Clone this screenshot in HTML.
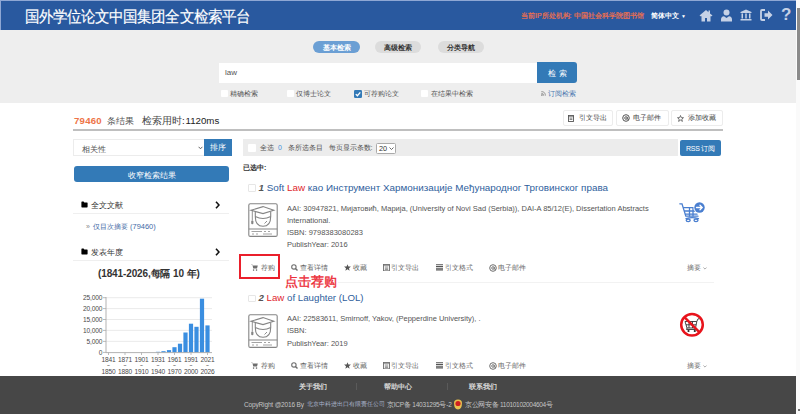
<!DOCTYPE html>
<html><head><meta charset="utf-8">
<style>
*{margin:0;padding:0;box-sizing:border-box}
html,body{width:800px;height:414px;overflow:hidden;background:#fff;font-family:"Liberation Sans",sans-serif;color:#333}
.a{position:absolute;white-space:nowrap}
#hdr{position:absolute;left:0;top:0;width:796px;height:30px;background:#29599f;border-top:1px solid #8ea7d4;border-left:1px solid #8ea7d4}
#sb{position:absolute;left:796px;top:0;width:4px;height:414px;background:#fafafa}
#thumb{position:absolute;left:797px;top:8px;width:3px;height:72px;background:#8a8a8a}
#band{position:absolute;left:0;top:30px;width:796px;height:73px;background:#eeeeee}
.tab{position:absolute;top:40.5px;height:12px;border-radius:6px;font-size:7.3px;font-weight:bold;text-align:center;line-height:13px}
.cb{position:absolute;width:7px;height:7px;background:#fff;border-radius:1px}
.btnw{position:absolute;background:#fff;border:1px solid #ececec;border-radius:2px}
#footer{position:absolute;left:0;top:376px;width:796px;height:38px;background:#474747}
.act{position:absolute;font-size:7.3px;color:#666;line-height:9px;white-space:nowrap}
.meta{position:absolute;left:287px;font-size:7.5px;color:#555;line-height:12px}
</style></head><body>
<div id="hdr"></div>
<div class="a" style="left:24.5px;top:6.8px;font-size:14.3px;color:#fff;line-height:18px;transform:scaleY(1.1);transform-origin:0 0;-webkit-text-stroke:0.15px #fff;letter-spacing:0.1px">国外学位论文中国集团全文检索平台</div>
<div class="a" style="left:521px;top:11px;font-size:7px;color:#f0704c;line-height:9px;-webkit-text-stroke:0.2px #f0704c">当前IP所处机构: 中国社会科学院图书馆</div>
<div class="a" style="left:651px;top:11px;font-size:7px;color:#fff;font-weight:bold;line-height:9px">简体中文 <span style="font-size:5px">▼</span></div>


<svg class="a" style="left:699px;top:9px" width="14" height="13" viewBox="0 0 14 13"><path d="M7 1 L0.5 6.5 L2 7.5 L2.5 7 V12.5 H6 V9 H8 V12.5 H11.5 V7 L12 7.5 L13.5 6.5 L11 4.4 V1.5 H9.5 V3.2 Z" fill="#c5d1e6"/></svg>
<svg class="a" style="left:721px;top:9px" width="11" height="13" viewBox="0 0 11 13"><circle cx="5.5" cy="3.5" r="3" fill="#c5d1e6"/><path d="M0 12.5 V10.5 Q0 7.5 3 7.3 L5.5 9 L8 7.3 Q11 7.5 11 10.5 V12.5 Z" fill="#c5d1e6"/></svg>
<svg class="a" style="left:740px;top:9px" width="12" height="12" viewBox="0 0 12 12"><path d="M6 0.5 L0.5 3 V4 H11.5 V3 Z M1.5 4.5 H3 V9.5 H1.5 Z M5.25 4.5 H6.75 V9.5 H5.25 Z M9 4.5 H10.5 V9.5 H9 Z M0.5 10 H11.5 V11.5 H0.5 Z" fill="#c5d1e6"/></svg>
<svg class="a" style="left:760px;top:9px" width="13" height="12" viewBox="0 0 13 12"><path d="M5 1 H2 Q1 1 1 2 V10 Q1 11 2 11 H5" stroke="#c5d1e6" stroke-width="1.8" fill="none"/><path d="M4.5 4.3 H8 V1.5 L12.5 6 L8 10.5 V7.7 H4.5 Z" fill="#c5d1e6"/></svg>
<div class="a" style="left:781px;top:5px;font-size:17px;font-weight:bold;color:#c5d1e6;line-height:20px">?</div>
<div id="sb"></div><div id="thumb"></div><div class="a" style="left:798px;top:409px;width:2px;height:2px;background:#777"></div>
<div id="band"></div>
<div class="tab" style="left:313px;width:47px;background:#6b9fd4;color:#fff">基本检索</div>
<div class="tab" style="left:375px;width:46px;background:#dcdcdc;color:#333">高级检索</div>
<div class="tab" style="left:438px;width:46px;background:#dcdcdc;color:#333">分类导航</div>

<div class="a" style="left:219px;top:63px;width:318px;height:20px;background:#fff"></div>
<div class="a" style="left:225px;top:67px;font-size:8px;color:#555;line-height:12px">law</div>
<div class="a" style="left:537px;top:62px;width:40px;height:21px;background:#337ab7;border-radius:0 3px 3px 0;color:#fff;font-size:7.5px;text-align:center;line-height:23px;letter-spacing:2.5px;padding-left:3.5px">检索</div>

<div class="cb" style="left:221px;top:90px"></div>
<div class="a" style="left:230px;top:89px;font-size:7px;color:#555;line-height:9px">精确检索</div>
<div class="cb" style="left:287px;top:90px"></div>
<div class="a" style="left:296px;top:89px;font-size:7px;color:#555;line-height:9px">仅博士论文</div>
<svg class="a" style="left:354px;top:90px" width="8" height="8" viewBox="0 0 8 8"><rect width="8" height="8" rx="1.2" fill="#337ab7"/><path d="M1.8 4.1 L3.4 5.7 L6.3 2.4" stroke="#fff" stroke-width="1.3" fill="none"/></svg>
<div class="a" style="left:364px;top:89px;font-size:7px;color:#555;line-height:9px">可荐购论文</div>
<div class="cb" style="left:421px;top:90px"></div>
<div class="a" style="left:431px;top:89px;font-size:7px;color:#555;line-height:9px">在结果中检索</div>
<div class="a" style="left:541px;top:89px;font-size:7px;color:#4a78b0;line-height:9px"><svg width="5" height="5" viewBox="0 0 5 5" style="vertical-align:0"><circle cx="0.9" cy="4.1" r="0.8" fill="#777"/><path d="M0.3 2.3 A2.4 2.4 0 0 1 2.7 4.7 M0.3 0.6 A4.1 4.1 0 0 1 4.4 4.7" stroke="#777" stroke-width="0.7" fill="none"/></svg> 订阅检索</div>

<!-- results header -->
<div class="a" style="left:74px;top:115px;font-size:9.6px;line-height:12px;color:#ee7447;font-weight:bold;letter-spacing:0.25px">79460</div>
<div class="a" style="left:107px;top:115px;font-size:9.2px;line-height:12px;color:#555">条结果</div>
<div class="a" style="left:142px;top:115px;font-size:9.7px;line-height:12px;color:#444">检索用时<span style="color:#222">:&#8202;1120ms</span></div>
<div class="btnw" style="left:563px;top:110px;width:50px;height:16px"></div>
<div class="btnw" style="left:616px;top:110px;width:53px;height:16px"></div>
<div class="btnw" style="left:671px;top:110px;width:52px;height:16px"></div>
<svg class="a" style="left:568px;top:114.5px" width="6" height="7" viewBox="0 0 6 7"><rect x="0.5" y="0.5" width="5" height="6" fill="none" stroke="#555" stroke-width="0.9"/><path d="M0.5 1.7 H5.5 M1.6 3.2 H4.4 M1.6 4.5 H4.4" stroke="#555" stroke-width="0.7"/></svg>
<div class="a" style="left:578.7px;top:113.5px;font-size:7.1px;color:#444;line-height:9px">引文导出</div>
<svg class="a" style="left:621.5px;top:114px" width="8" height="8" viewBox="0 0 8 8"><circle cx="4" cy="4" r="3.3" stroke="#555" stroke-width="1" fill="none"/><circle cx="4" cy="4" r="1.3" stroke="#555" stroke-width="0.9" fill="none"/><path d="M5.3 2.8 V5 Q5.5 6 6.8 5.3" stroke="#555" stroke-width="0.8" fill="none"/></svg>
<div class="a" style="left:633.4px;top:113.5px;font-size:7.1px;color:#444;line-height:9px">电子邮件</div>
<svg class="a" style="left:677px;top:114.5px" width="7" height="7" viewBox="0 0 7 7"><path d="M3.5 0.5 L4.3 2.6 L6.5 2.7 L4.8 4.1 L5.4 6.4 L3.5 5.1 L1.6 6.4 L2.2 4.1 L0.5 2.7 L2.7 2.6 Z" fill="none" stroke="#555" stroke-width="0.8"/></svg>
<div class="a" style="left:687.7px;top:113.5px;font-size:7.1px;color:#444;line-height:9px">添加收藏</div>
<div class="a" style="left:73px;top:129px;width:650px;height:2px;background:#bfbfbf"></div>

<!-- left column -->
<div class="a" style="left:73px;top:139px;width:132px;height:17px;border:1px solid #ececec;background:#fff"></div>
<div class="a" style="left:82px;top:144.5px;font-size:8px;color:#555;line-height:10px">相关性</div><svg class="a" style="left:198px;top:146px" width="5" height="4" viewBox="0 0 5 4"><path d="M0.6 0.8 L2.5 2.8 L4.4 0.8" stroke="#555" stroke-width="0.9" fill="none"/></svg>
<div class="a" style="left:204px;top:139px;width:28px;height:17px;background:#337ab7;color:#fff;font-size:8px;text-align:center;line-height:17px">排序</div>
<div class="a" style="left:74px;top:166px;width:155px;height:16px;background:#337ab7;border-radius:3px;color:#fff;font-size:8px;text-align:center;line-height:19px">收窄检索结果</div>


<!-- facets -->
<svg class="a" style="left:81px;top:201px" width="7" height="7" viewBox="0 0 7 7"><path d="M0.4 1.2 Q0.4 0.6 1 0.6 H2.6 L3.3 1.4 H6 Q6.6 1.4 6.6 2 V5.8 Q6.6 6.4 6 6.4 H1 Q0.4 6.4 0.4 5.8 Z" fill="#000"/></svg>
<div class="a" style="left:90.5px;top:200.5px;font-size:7.7px;color:#333;line-height:10px">全文文献</div>
<svg class="a" style="left:215px;top:201px" width="5" height="8" viewBox="0 0 5 8"><path d="M1 0.8 L4 4 L1 7.2" stroke="#111" stroke-width="1.6" fill="none"/></svg>
<div class="a" style="left:73px;top:213px;width:156px;height:1px;background:#efefef"></div>
<div class="a" style="left:86px;top:221.5px;font-size:7px;color:#888;line-height:10px">»</div><div class="a" style="left:93px;top:222px;font-size:7.45px;color:#3f6aa6;line-height:10px">仅目次摘要 (79460)</div>
<svg class="a" style="left:81px;top:248px" width="7" height="7" viewBox="0 0 7 7"><path d="M0.4 1.2 Q0.4 0.6 1 0.6 H2.6 L3.3 1.4 H6 Q6.6 1.4 6.6 2 V5.8 Q6.6 6.4 6 6.4 H1 Q0.4 6.4 0.4 5.8 Z" fill="#000"/></svg>
<div class="a" style="left:90.5px;top:247.5px;font-size:7.7px;color:#333;line-height:10px">发表年度</div>
<svg class="a" style="left:215px;top:248px" width="5" height="8" viewBox="0 0 5 8"><path d="M1 0.8 L4 4 L1 7.2" stroke="#111" stroke-width="1.6" fill="none"/></svg>
<div class="a" style="left:73px;top:260px;width:156px;height:1px;background:#efefef"></div>
<div class="a" style="left:98px;top:267px;font-size:10px;font-weight:bold;color:#333;line-height:13px;letter-spacing:-0.12px">(1841-2026,每隔 10 年)</div>
<svg class="a" style="left:76px;top:286px" width="160" height="92" viewBox="76 286 160 92" font-family="Liberation Sans, sans-serif" font-size="6.6" fill="#4a4a4a">
<line x1="106" y1="297.7" x2="212" y2="297.7" stroke="#e8e8e8" stroke-width="0.9"/>
<line x1="103" y1="297.7" x2="106" y2="297.7" stroke="#aaa" stroke-width="0.8"/>
<text x="102.3" y="300.0" text-anchor="end" letter-spacing="-0.15">25,000</text>
<line x1="106" y1="308.6" x2="212" y2="308.6" stroke="#e8e8e8" stroke-width="0.9"/>
<line x1="103" y1="308.6" x2="106" y2="308.6" stroke="#aaa" stroke-width="0.8"/>
<text x="102.3" y="310.90000000000003" text-anchor="end" letter-spacing="-0.15">20,000</text>
<line x1="106" y1="319.5" x2="212" y2="319.5" stroke="#e8e8e8" stroke-width="0.9"/>
<line x1="103" y1="319.5" x2="106" y2="319.5" stroke="#aaa" stroke-width="0.8"/>
<text x="102.3" y="321.8" text-anchor="end" letter-spacing="-0.15">15,000</text>
<line x1="106" y1="330.4" x2="212" y2="330.4" stroke="#e8e8e8" stroke-width="0.9"/>
<line x1="103" y1="330.4" x2="106" y2="330.4" stroke="#aaa" stroke-width="0.8"/>
<text x="102.3" y="332.7" text-anchor="end" letter-spacing="-0.15">10,000</text>
<line x1="106" y1="341.4" x2="212" y2="341.4" stroke="#e8e8e8" stroke-width="0.9"/>
<line x1="103" y1="341.4" x2="106" y2="341.4" stroke="#aaa" stroke-width="0.8"/>
<text x="102.3" y="343.7" text-anchor="end" letter-spacing="-0.15">5,000</text>
<line x1="103" y1="352.4" x2="106" y2="352.4" stroke="#aaa" stroke-width="0.8"/>
<text x="102.3" y="354.7" text-anchor="end" letter-spacing="-0.15">0</text>
<rect x="155.90" y="351.80" width="4.2" height="0.6" fill="#3a8ee0"/>
<rect x="161.40" y="351.20" width="4.2" height="1.2" fill="#3a8ee0"/>
<rect x="166.90" y="350.10" width="4.2" height="2.3" fill="#3a8ee0"/>
<rect x="172.40" y="347.20" width="4.2" height="5.2" fill="#3a8ee0"/>
<rect x="177.90" y="343.70" width="4.2" height="8.7" fill="#3a8ee0"/>
<rect x="183.40" y="332.50" width="4.2" height="19.9" fill="#3a8ee0"/>
<rect x="188.90" y="323.70" width="4.2" height="28.7" fill="#3a8ee0"/>
<rect x="194.40" y="326.80" width="4.2" height="25.6" fill="#3a8ee0"/>
<rect x="199.90" y="298.70" width="4.2" height="53.7" fill="#3a8ee0"/>
<rect x="205.40" y="325.40" width="4.2" height="27" fill="#3a8ee0"/>
<line x1="106" y1="297" x2="106" y2="352.8" stroke="#aaa" stroke-width="0.9"/>
<line x1="106" y1="352.6" x2="212" y2="352.6" stroke="#aaa" stroke-width="0.9"/>
<line x1="108.5" y1="352.6" x2="108.5" y2="355" stroke="#aaa" stroke-width="0.8"/>
<text x="108.5" y="361.5" text-anchor="middle" letter-spacing="-0.15">1841</text>
<text x="108.5" y="367" text-anchor="middle" font-size="5">~</text>
<text x="108.5" y="373.5" text-anchor="middle" letter-spacing="-0.15">1850</text>
<line x1="125.0" y1="352.6" x2="125.0" y2="355" stroke="#aaa" stroke-width="0.8"/>
<text x="125.0" y="361.5" text-anchor="middle" letter-spacing="-0.15">1871</text>
<text x="125.0" y="367" text-anchor="middle" font-size="5">~</text>
<text x="125.0" y="373.5" text-anchor="middle" letter-spacing="-0.15">1880</text>
<line x1="141.5" y1="352.6" x2="141.5" y2="355" stroke="#aaa" stroke-width="0.8"/>
<text x="141.5" y="361.5" text-anchor="middle" letter-spacing="-0.15">1901</text>
<text x="141.5" y="367" text-anchor="middle" font-size="5">~</text>
<text x="141.5" y="373.5" text-anchor="middle" letter-spacing="-0.15">1910</text>
<line x1="158.0" y1="352.6" x2="158.0" y2="355" stroke="#aaa" stroke-width="0.8"/>
<text x="158.0" y="361.5" text-anchor="middle" letter-spacing="-0.15">1931</text>
<text x="158.0" y="367" text-anchor="middle" font-size="5">~</text>
<text x="158.0" y="373.5" text-anchor="middle" letter-spacing="-0.15">1940</text>
<line x1="174.5" y1="352.6" x2="174.5" y2="355" stroke="#aaa" stroke-width="0.8"/>
<text x="174.5" y="361.5" text-anchor="middle" letter-spacing="-0.15">1961</text>
<text x="174.5" y="367" text-anchor="middle" font-size="5">~</text>
<text x="174.5" y="373.5" text-anchor="middle" letter-spacing="-0.15">1970</text>
<line x1="191.0" y1="352.6" x2="191.0" y2="355" stroke="#aaa" stroke-width="0.8"/>
<text x="191.0" y="361.5" text-anchor="middle" letter-spacing="-0.15">1991</text>
<text x="191.0" y="367" text-anchor="middle" font-size="5">~</text>
<text x="191.0" y="373.5" text-anchor="middle" letter-spacing="-0.15">2000</text>
<line x1="207.5" y1="352.6" x2="207.5" y2="355" stroke="#aaa" stroke-width="0.8"/>
<text x="207.5" y="361.5" text-anchor="middle" letter-spacing="-0.15">2021</text>
<text x="207.5" y="367" text-anchor="middle" font-size="5">~</text>
<text x="207.5" y="373.5" text-anchor="middle" letter-spacing="-0.15">2026</text>
</svg>

<!-- results toolbar -->
<div class="a" style="left:243px;top:139px;width:435px;height:17px;background:#ececec"></div>
<div class="cb" style="left:248px;top:144px;width:8px;height:8px;border-color:#ddd"></div>
<div class="a" style="left:260px;top:143px;font-size:7px;color:#555;line-height:9px">全选</div>
<div class="a" style="left:278px;top:143px;font-size:7px;color:#4a90d9;line-height:9px">0</div>
<div class="a" style="left:288px;top:143px;font-size:7px;color:#555;line-height:9px">条所选条目</div>
<div class="a" style="left:328.5px;top:143px;font-size:7.3px;color:#555;line-height:9px">每页显示条数:</div>
<div class="a" style="left:376px;top:143px;width:20px;height:11px;border:1px solid #aaa;border-radius:1.5px;background:#fff;font-size:7.3px;color:#333;line-height:9px;padding-left:2px">20</div><svg class="a" style="left:389px;top:147px" width="5" height="3" viewBox="0 0 5 3"><path d="M0.5 0.5 L2.5 2.5 L4.5 0.5" stroke="#444" stroke-width="0.8" fill="none"/></svg>
<div class="a" style="left:680px;top:140px;width:41px;height:16px;background:#337ab7;border-radius:2px;color:#fff;font-size:7px;text-align:center;line-height:18px;letter-spacing:-0.2px">RSS 订阅</div>
<div class="a" style="left:243px;top:163px;font-size:7px;font-weight:bold;color:#333;line-height:9px">已选中:</div>

<!-- item 1 -->
<div class="cb" style="left:248px;top:184px;width:8px;height:7.5px;border:1px solid #e6e6e6"></div>
<div class="a" style="left:258.5px;top:180.5px;font-size:9.85px;line-height:13px;color:#2e5e9c"><i style="color:#555;font-weight:bold;font-style:italic">1</i> Soft <span style="color:#e0262c">Law</span> као Инструмент Хармонизације Међународног Трговинског права</div>
<svg class="a" style="left:248px;top:203px" width="30" height="35" viewBox="0 0 30 35" fill="none" stroke="#858585" stroke-width="1">
<rect x="0.8" y="0.8" width="28.4" height="32.6" rx="1.5" stroke-width="1.1"/>
<line x1="0.8" y1="26" x2="29.2" y2="26"/>
<path d="M3.5 28.5 H14 M16 28.5 H18 M20 28.5 H22 M4 31 H6 M8 31 H10 M15 31 H24" stroke-width="0.9" stroke="#999"/>
<path d="M3 7.3 L15 3.6 L25.8 7.3 L15 10.6 Z" stroke-width="1.1"/>
<path d="M7.3 9 V13.5 M22.7 9 V13.5 M7.3 13.5 Q15 17.5 22.7 13.5 M7.3 13.5 Q7.3 23.3 15 23.3 Q22.7 23.3 22.7 13.5" stroke-width="1.1"/>
<path d="M4.3 7.8 V17.5" stroke-width="0.9"/><rect x="3.2" y="17.5" width="2.2" height="3.8" rx="1" fill="#858585" stroke="none"/>
<path d="M16.5 20.5 L19 18" stroke-width="0.9"/>
</svg>
<div class="meta" style="top:202.8px;line-height:12.2px">AAI: 30947821, Мијатовић, Марија, (University of Novi Sad (Serbia)), DAI-A 85/12(E), Dissertation Abstracts<br>International.<br>ISBN: 9798383080283<br>PublishYear: 2016</div>
<svg class="a" style="left:679px;top:200px" width="27" height="24" viewBox="0 0 27 24" fill="none" stroke="#4a7fd0" stroke-width="1.3" stroke-linecap="round">
<path d="M0.8 3.8 H3 L6.8 16.2 H19"/>
<path d="M4.6 7.6 H17 M5.6 11 H17.5 M6.5 14.2 H18"/>
<path d="M10.5 7.6 V16 M14 7.6 V16"/>
<path d="M7 18.6 Q13 16.5 19.5 18.6"/>
<ellipse cx="9.2" cy="20.3" rx="2" ry="1.3"/><ellipse cx="17" cy="20.3" rx="2" ry="1.3"/>
<circle cx="20.5" cy="7.5" r="6" fill="#fff" stroke="none"/>
<circle cx="20.5" cy="7.5" r="5.2" fill="#4a7fd0" stroke="none"/>
<path d="M17.5 7.5 H23 M21 5.3 L23.2 7.5 L21 9.7" stroke="#fff" stroke-width="1.3"/>
</svg>
<div class="a" style="left:239px;top:254px;width:41px;height:25px;border:2px solid #ea1f2b"></div>
<div class="a" style="left:285px;top:273.5px;font-size:13px;color:#ec2a35;line-height:15px;-webkit-text-stroke:0.35px #ec2a35">点击荐购</div>
<svg class="a" style="left:251px;top:263.5px" width="7" height="7" viewBox="0 0 7 7"><path d="M0 0.6 H1.4 L2.2 4.6 H6 L6.8 1.6 H1.7 Z" fill="#6e6e6e"/><circle cx="2.6" cy="6.1" r="0.8" fill="#6e6e6e"/><circle cx="5.5" cy="6.1" r="0.8" fill="#6e6e6e"/></svg>
<div class="act" style="left:260.5px;top:263.0px">荐购</div>
<svg class="a" style="left:290.5px;top:263.5px" width="7" height="7" viewBox="0 0 7 7"><circle cx="2.9" cy="2.9" r="2.2" stroke="#6e6e6e" stroke-width="1.1" fill="none"/><path d="M4.4 4.4 L6.5 6.5" stroke="#6e6e6e" stroke-width="1.4"/></svg>
<div class="act" style="left:299.5px;top:263.0px">查看详情</div>
<svg class="a" style="left:343.5px;top:263.5px" width="7" height="7" viewBox="0 0 7 7"><path d="M3.5 0.2 L4.4 2.5 L6.9 2.6 L5 4.2 L5.6 6.7 L3.5 5.3 L1.4 6.7 L2 4.2 L0.1 2.6 L2.6 2.5 Z" fill="#555"/></svg>
<div class="act" style="left:352.7px;top:263.0px">收藏</div>
<svg class="a" style="left:383px;top:263.5px" width="7" height="7" viewBox="0 0 7 7"><rect x="0.5" y="0.5" width="6" height="6.3" fill="none" stroke="#6e6e6e" stroke-width="0.9"/><path d="M0.5 1.6 H6.5 M1.8 3 H5.2 M1.8 4.3 H5.2 M1.8 5.5 H5.2" stroke="#6e6e6e" stroke-width="0.7"/></svg>
<div class="act" style="left:391.3px;top:263.0px">引文导出</div>
<svg class="a" style="left:436px;top:263.5px" width="7" height="7" viewBox="0 0 7 7"><path d="M0 0.8 H7 M0 2.5 H7 M0 4.2 H7 M0 5.9 H7" stroke="#555" stroke-width="1.1"/></svg>
<div class="act" style="left:445px;top:263.0px">引文格式</div>
<svg class="a" style="left:488.6px;top:263.5px" width="8" height="8" viewBox="0 0 8 8"><circle cx="4" cy="4" r="3.3" stroke="#6e6e6e" stroke-width="1" fill="none"/><circle cx="4" cy="4" r="1.3" stroke="#6e6e6e" stroke-width="0.9" fill="none"/><path d="M5.3 2.8 V5 Q5.5 6 6.8 5.3" stroke="#6e6e6e" stroke-width="0.8" fill="none"/></svg>
<div class="act" style="left:497.7px;top:263.0px">电子邮件</div>
<div class="act" style="left:686.5px;top:263.0px">摘要</div>
<svg class="a" style="left:703px;top:266.5px" width="4" height="3" viewBox="0 0 4 3"><path d="M0.4 0.5 L2 2.1 L3.6 0.5" stroke="#888" stroke-width="0.7" fill="none"/></svg>
<div class="a" style="left:338px;top:282px;width:376px;height:1px;background:#f2f2f2"></div>

<!-- item 2 -->
<div class="cb" style="left:248px;top:294.5px;width:7.5px;height:7.5px;border:1px solid #e6e6e6"></div>
<div class="a" style="left:258.5px;top:291px;font-size:9.7px;line-height:13px;color:#2e5e9c"><i style="color:#555;font-weight:bold;font-style:italic">2</i> <span style="color:#e0262c">Law</span> of Laughter (LOL)</div>
<svg class="a" style="left:248px;top:313.5px" width="30" height="35" viewBox="0 0 30 35" fill="none" stroke="#858585" stroke-width="1">
<rect x="0.8" y="0.8" width="28.4" height="32.6" rx="1.5" stroke-width="1.1"/>
<line x1="0.8" y1="26" x2="29.2" y2="26"/>
<path d="M3.5 28.5 H14 M16 28.5 H18 M20 28.5 H22 M4 31 H6 M8 31 H10 M15 31 H24" stroke-width="0.9" stroke="#999"/>
<path d="M3 7.3 L15 3.6 L25.8 7.3 L15 10.6 Z" stroke-width="1.1"/>
<path d="M7.3 9 V13.5 M22.7 9 V13.5 M7.3 13.5 Q15 17.5 22.7 13.5 M7.3 13.5 Q7.3 23.3 15 23.3 Q22.7 23.3 22.7 13.5" stroke-width="1.1"/>
<path d="M4.3 7.8 V17.5" stroke-width="0.9"/><rect x="3.2" y="17.5" width="2.2" height="3.8" rx="1" fill="#858585" stroke="none"/>
<path d="M16.5 20.5 L19 18" stroke-width="0.9"/>
</svg>
<div class="meta" style="top:312.8px;line-height:12.5px">AAI: 22583611, Smirnoff, Yakov, (Pepperdine University), .<br>ISBN:<br>PublishYear: 2019</div>
<svg class="a" style="left:251px;top:361.5px" width="7" height="7" viewBox="0 0 7 7"><path d="M0 0.6 H1.4 L2.2 4.6 H6 L6.8 1.6 H1.7 Z" fill="#6e6e6e"/><circle cx="2.6" cy="6.1" r="0.8" fill="#6e6e6e"/><circle cx="5.5" cy="6.1" r="0.8" fill="#6e6e6e"/></svg>
<div class="act" style="left:260.5px;top:361.0px">荐购</div>
<svg class="a" style="left:290.5px;top:361.5px" width="7" height="7" viewBox="0 0 7 7"><circle cx="2.9" cy="2.9" r="2.2" stroke="#6e6e6e" stroke-width="1.1" fill="none"/><path d="M4.4 4.4 L6.5 6.5" stroke="#6e6e6e" stroke-width="1.4"/></svg>
<div class="act" style="left:299.5px;top:361.0px">查看详情</div>
<svg class="a" style="left:343.5px;top:361.5px" width="7" height="7" viewBox="0 0 7 7"><path d="M3.5 0.2 L4.4 2.5 L6.9 2.6 L5 4.2 L5.6 6.7 L3.5 5.3 L1.4 6.7 L2 4.2 L0.1 2.6 L2.6 2.5 Z" fill="#555"/></svg>
<div class="act" style="left:352.7px;top:361.0px">收藏</div>
<svg class="a" style="left:383px;top:361.5px" width="7" height="7" viewBox="0 0 7 7"><rect x="0.5" y="0.5" width="6" height="6.3" fill="none" stroke="#6e6e6e" stroke-width="0.9"/><path d="M0.5 1.6 H6.5 M1.8 3 H5.2 M1.8 4.3 H5.2 M1.8 5.5 H5.2" stroke="#6e6e6e" stroke-width="0.7"/></svg>
<div class="act" style="left:391.3px;top:361.0px">引文导出</div>
<svg class="a" style="left:436px;top:361.5px" width="7" height="7" viewBox="0 0 7 7"><path d="M0 0.8 H7 M0 2.5 H7 M0 4.2 H7 M0 5.9 H7" stroke="#555" stroke-width="1.1"/></svg>
<div class="act" style="left:445px;top:361.0px">引文格式</div>
<svg class="a" style="left:488.6px;top:361.5px" width="8" height="8" viewBox="0 0 8 8"><circle cx="4" cy="4" r="3.3" stroke="#6e6e6e" stroke-width="1" fill="none"/><circle cx="4" cy="4" r="1.3" stroke="#6e6e6e" stroke-width="0.9" fill="none"/><path d="M5.3 2.8 V5 Q5.5 6 6.8 5.3" stroke="#6e6e6e" stroke-width="0.8" fill="none"/></svg>
<div class="act" style="left:497.7px;top:361.0px">电子邮件</div>
<div class="act" style="left:686.5px;top:361.0px">摘要</div>
<svg class="a" style="left:703px;top:364.5px" width="4" height="3" viewBox="0 0 4 3"><path d="M0.4 0.5 L2 2.1 L3.6 0.5" stroke="#888" stroke-width="0.7" fill="none"/></svg>
<svg class="a" style="left:679px;top:312px" width="26" height="26" viewBox="0 0 26 26">
<g fill="none" stroke="#333" stroke-width="0.9"><path d="M6 9.5 H17.8 L16.5 16 H8 Z"/><path d="M17.8 9.5 L19 6.8 H20.5"/><path d="M7 12.8 H17.2 M10 9.5 V16 M13.5 9.5 V16"/><path d="M8 16 L7.5 17.5 H17"/></g>
<circle cx="9.5" cy="19" r="1.1" fill="#222"/><circle cx="15.8" cy="19" r="1.1" fill="#222"/>
<circle cx="13" cy="12.8" r="10.8" fill="none" stroke="#e8141c" stroke-width="2.5"/><line x1="5.4" y1="5.2" x2="20.6" y2="20.4" stroke="#e8141c" stroke-width="2.5"/>
</svg>

<!-- footer -->
<div id="footer"></div>

<div class="a" style="left:299px;top:382px;font-size:7px;color:#dcdcdc;line-height:9px;-webkit-text-stroke:0.25px #dcdcdc">关于我们</div>
<div class="a" style="left:356px;top:383px;width:1px;height:7px;background:#5a5a5a"></div>
<div class="a" style="left:384px;top:382px;font-size:7px;color:#dcdcdc;line-height:9px;-webkit-text-stroke:0.25px #dcdcdc">帮助中心</div>
<div class="a" style="left:447px;top:383px;width:1px;height:7px;background:#5a5a5a"></div>
<div class="a" style="left:469px;top:382px;font-size:7px;color:#dcdcdc;line-height:9px;-webkit-text-stroke:0.25px #dcdcdc">联系我们</div>
<div class="a" style="left:244px;top:400px;font-size:6.5px;letter-spacing:-0.15px;color:#c4c4c4;line-height:9px">CopyRight @2016 By</div>
<div class="a" style="left:306.5px;top:400px;font-size:6px;color:#aab4cc;line-height:9px">北京中科进出口有限责任公司</div>
<div class="a" style="left:387px;top:400px;font-size:6.5px;letter-spacing:-0.22px;color:#c4c4c4;line-height:9px">京ICP备 14031295号-2</div>
<div class="a" style="left:465px;top:400px;font-size:6.5px;letter-spacing:-0.3px;color:#c4c4c4;line-height:9px">京公网安备 11010102004604号</div>
<svg class="a" style="left:453px;top:399px" width="10" height="11" viewBox="0 0 10 11"><path d="M1 4 Q1 10 5 10.5 Q9 10 9 4 Q9 0.5 5 0.5 Q1 0.5 1 4Z" fill="#e8c050"/><circle cx="5" cy="4.5" r="2.6" fill="#d02020"/></svg>
</body></html>
